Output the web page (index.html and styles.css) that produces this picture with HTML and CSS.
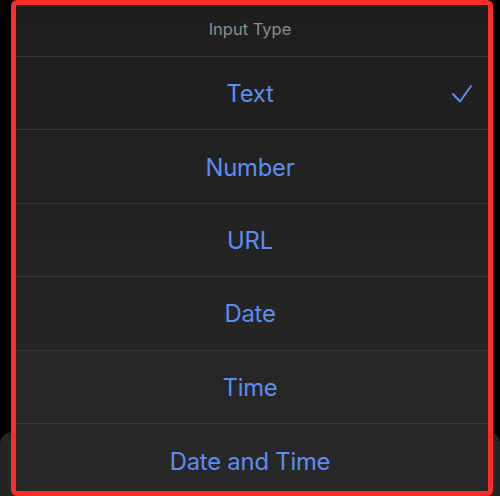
FILE: index.html
```html
<!DOCTYPE html>
<html lang="en">
<head>
  <meta charset="UTF-8" />
  <meta name="viewport" content="width=device-width, initial-scale=1.0"/>
  <title>Input Type</title>
  <link rel="stylesheet" href="styles.css">
</head>
<body>
  <div class="backdrop"></div>

  <div class="sheet">
    <div class="sheet-title">Input Type</div>
    <div class="option selected">
      Text
      <svg class="check" width="22" height="20" viewBox="0 0 22 20">
        <path d="M2 10 L9 17.5 L20 2" fill="none" stroke="#5b8ef0" stroke-width="2" stroke-linecap="round" stroke-linejoin="round"/>
      </svg>
    </div>
    <div class="option">Number</div>
    <div class="option">URL</div>
    <div class="option">Date</div>
    <div class="option">Time</div>
    <div class="option">Date and Time</div>
  </div>
</body>
</html>
```

FILE: styles.css
```css
* {
  box-sizing: border-box;
  margin: 0;
  padding: 0;
  font-family: Inter, "Noto Sans", sans-serif;
}

html, body {
  height: 100%;
}

body {
  background-color: #000;
  position: relative;
  overflow: hidden;
}

/* sheet peeking from behind at the bottom */
.backdrop {
  position: absolute;
  left: 0;
  right: 0;
  top: 432px;
  bottom: 0;
  background: #252525;
  border-radius: 12px 12px 0 0;
}

.sheet {
  position: relative;
  margin: 0 7px 0 11px;
  height: 496px;
  border: 5px solid #fe2b2b;
  border-radius: 6px;
  background: linear-gradient(#1e1e1e, #282828);
  overflow: hidden;
  display: flex;
  flex-direction: column;
}

.sheet-title {
  height: 52px;
  flex-shrink: 0;
  display: flex;
  align-items: center;
  justify-content: center;
  padding: 0 4px 4px 0;
  color: #8d8d8d;
  font-size: 16.5px;
  border-bottom: 1px solid #383838;
}

.option {
  position: relative;
  height: 73.4px;
  flex-shrink: 0;
  display: flex;
  align-items: center;
  justify-content: center;
  padding: 1px 4px 0 0;
  color: #5b8ef0;
  font-size: 23.8px;
  letter-spacing: -0.2px;
  border-bottom: 1px solid #383838;
}

.option:last-child {
  border-bottom: none;
}

.check {
  position: absolute;
  right: 15px;
  top: 27px;
}
```
